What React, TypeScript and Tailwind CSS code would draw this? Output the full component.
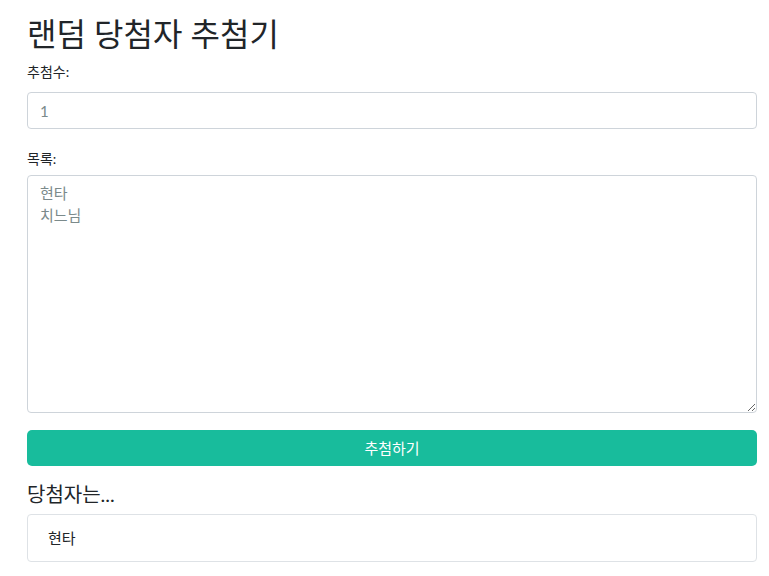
import React from 'react'

export default function App() {
  const [count, setCount] = React.useState('')
  const [list, setList] = React.useState('')
  const [winners, setWinners] = React.useState<string[]>(['현타'])

  function draw() {
    const names = list.split('\n').map(s => s.trim()).filter(Boolean)
    const n = Math.max(1, parseInt(count) || 1)
    const pool = names.length ? [...names] : ['현타', '치느님']
    const out: string[] = []
    while (out.length < n && pool.length) out.push(pool.splice(Math.floor(Math.random() * pool.length), 1)[0])
    setWinners(out)
  }

  return (
    <div className="min-h-screen bg-white pl-[27px] pr-[12px] pt-[14px] text-[#212529] font-['Lato','Noto_Sans_CJK_KR',sans-serif]">
      <h1 className="text-[32px] leading-[40px] font-normal mb-[8px]">랜덤 당첨자 추첨기</h1>

      <label className="block text-[14px] leading-[20px] mb-[10px]">추첨수:</label>
      <input
        value={count}
        onChange={e => setCount(e.target.value)}
        placeholder="1"
        className="block w-full h-[37px] px-[12px] text-[15px] border border-[#ced4da] rounded-[4px] outline-none placeholder:text-[#7b8a8b] mb-[20px]"
      />

      <label className="block text-[14px] leading-[20px] mb-[6px]">목록:</label>
      <textarea
        value={list}
        onChange={e => setList(e.target.value)}
        placeholder={'현타\n치느님'}
        className="block w-full h-[238px] px-[12px] py-[6px] text-[15px] leading-[22px] border border-[#ced4da] rounded-[4px] outline-none resize-y placeholder:text-[#7b8a8b] mb-[17px]"
      />

      <button
        onClick={draw}
        className="block w-full h-[36px] bg-[#18bc9c] text-white text-[15px] rounded-[5px] mb-[14px]"
      >
        추첨하기
      </button>

      <h4 className="text-[20px] leading-[28px] mb-[6px]">당첨자는...</h4>
      <ul className="border border-[#dee2e6] rounded-[4px]">
        {winners.map((w, i) => (
          <li key={i} className="px-[20px] py-[12px] text-[15px] leading-[22px]">{w}</li>
        ))}
      </ul>
    </div>
  )
}
